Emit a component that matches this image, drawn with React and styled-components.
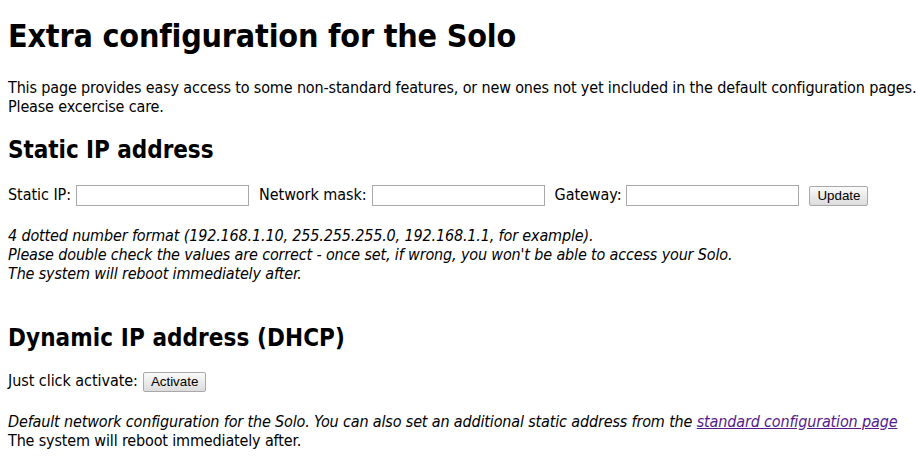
import styled, { createGlobalStyle } from 'styled-components'

const GlobalStyle = createGlobalStyle`
  html, body {
    margin: 0;
    padding: 0;
    background: #fff;
  }
  body {
    font-family: "DejaVu Sans Condensed", "DejaVu Sans", sans-serif;
    font-size: 16px;
    line-height: 19px;
    letter-spacing: -0.15px;
    color: #000;
  }
`

const Page = styled.div`
  padding: 17px 8px 0;
`

const Title = styled.h1`
  margin: 0;
  font-size: 32px;
  line-height: 38px;
  font-weight: bold;
  letter-spacing: -0.2px;
`

const Intro = styled.p`
  margin: 23px 0 0;
  white-space: nowrap;
`

const Heading = styled.h2`
  margin: ${p => p.top}px 0 0;
  font-size: 24px;
  line-height: 29px;
  font-weight: bold;
  letter-spacing: ${p => p.spacing || 0}px;
`

const Row = styled.div`
  display: flex;
  align-items: baseline;
  gap: 10px;
  margin-top: ${p => p.top}px;
  letter-spacing: -0.05px;
`

const Field = styled.label`
  display: flex;
  align-items: baseline;
  gap: 5px;
`

const TextInput = styled.input`
  box-sizing: border-box;
  width: 173px;
  height: 21px;
  margin: 0;
  padding: 1px 2px;
  border: 1px solid #a9a9a9;
  font-family: "Liberation Sans", Arial, sans-serif;
  font-size: 13.33px;
`

const Button = styled.button`
  box-sizing: border-box;
  height: 20px;
  margin: 0;
  padding: 0 7px;
  border: 1px solid #a9a9a9;
  border-radius: 2px;
  background: linear-gradient(#fafafa, #dcdcdc);
  font-family: "Liberation Sans", Arial, sans-serif;
  font-size: 13.33px;
  letter-spacing: 0;
  color: #000;
`

const Note = styled.p`
  margin: ${p => p.top}px 0 0;
  font-style: italic;
  white-space: nowrap;
`

const Plain = styled.span`
  font-style: normal;
`

const Link = styled.a`
  color: #551a8b;
  text-decoration: underline;
`

export default function App() {
  return <Page>
    <GlobalStyle/>
    <Title>Extra configuration for the Solo</Title>
    <Intro>
      This page provides easy access to some non-standard features, or new ones not yet included in the default configuration pages.<br/>
      Please excercise care.
    </Intro>

    <Heading top={20} spacing={-0.05}>Static IP address</Heading>
    <Row top={20}>
      <Field>Static IP: <TextInput type="text"/></Field>
      <Field>Network mask: <TextInput type="text"/></Field>
      <Field>Gateway: <TextInput type="text"/></Field>
      <Button>Update</Button>
    </Row>
    <Note top={20}>
      4 dotted number format (192.168.1.10, 255.255.255.0, 192.168.1.1, for example).<br/>
      Please double check the values are correct - once set, if wrong, you won't be able to access your Solo.<br/>
      The system will reboot immediately after.
    </Note>

    <Heading top={41} spacing={0.08}>Dynamic IP address (DHCP)</Heading>
    <Row top={18}>
      <Field>Just click activate: <Button>Activate</Button></Field>
    </Row>
    <Note top={20}>
      Default network configuration for the Solo. You can also set an additional static address from the <Link href="#">standard configuration page</Link><br/>
      <Plain>The system will reboot immediately after.</Plain>
    </Note>
  </Page>
}
